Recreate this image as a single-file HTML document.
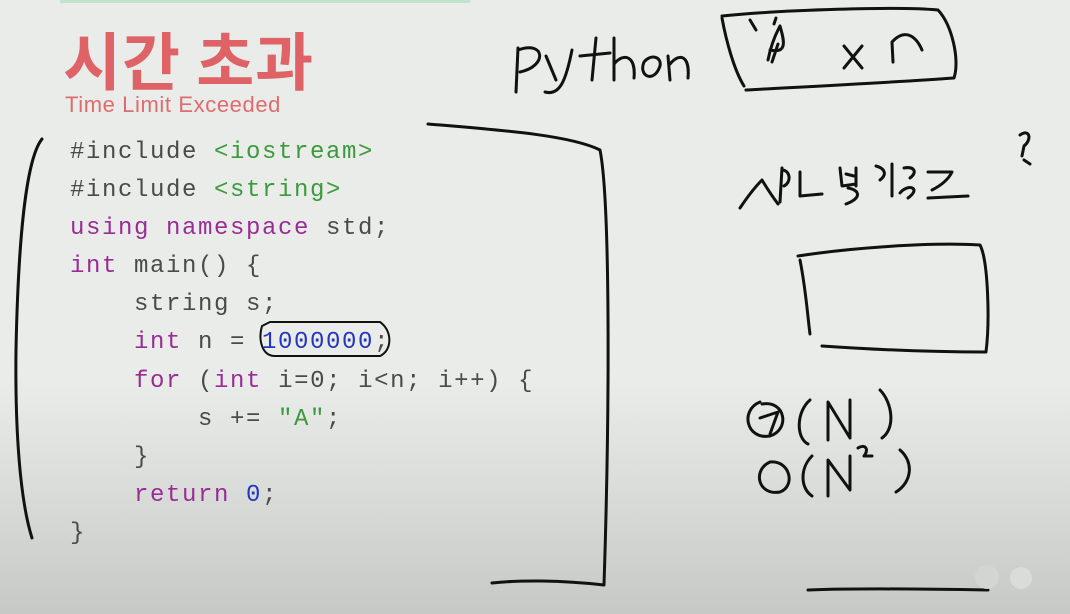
<!DOCTYPE html>
<html><head><meta charset="utf-8"><style>
html,body{margin:0;padding:0}
body{width:1070px;height:614px;overflow:hidden;position:relative;
background:linear-gradient(to bottom,#e9ece9 0%,#e9ece9 62%,#d9dcd9 80%,#c6c9c6 100%);
font-family:"Liberation Sans","Noto Sans CJK KR",sans-serif}
.t{position:absolute;left:63px;top:19px;font-size:63px;font-weight:bold;color:#de6266;letter-spacing:1px;font-family:"Noto Sans CJK KR",sans-serif;line-height:80px}
.s{position:absolute;left:65px;top:92px;font-size:22px;color:#df6b6e;letter-spacing:0.6px}
pre{position:absolute;left:70px;top:134px;margin:0;font-family:"Liberation Mono",monospace;font-size:24px;letter-spacing:1.6px;line-height:38.1px;color:#4a4a4a}
.k{color:#9a2c96}.g{color:#3c9a3c}.b{color:#2437c0}
.top{position:absolute;left:60px;top:0;width:410px;height:3px;background:#bfe6cc}
svg{position:absolute;left:0;top:0}
</style></head><body>
<div class="top"></div>
<div class="t">시간 초과</div>
<div class="s">Time Limit Exceeded</div>
<pre>#include <span class="g">&lt;iostream&gt;</span>
#include <span class="g">&lt;string&gt;</span>
<span class="k">using namespace</span> std;
<span class="k">int</span> main() {
    string s;
    <span class="k">int</span> n = <span class="b">1000000</span>;
    <span class="k">for</span> (<span class="k">int</span> i=0; i&lt;n; i++) {
        s += <span class="g">"A"</span>;
    }
    <span class="k">return</span> <span class="b">0</span>;
}</pre>
<svg width="1070" height="614" fill="none" stroke="#111" stroke-width="3" stroke-linecap="round" stroke-linejoin="round">
<path d="M42 139 C25 160 18 250 16 350 C15 430 20 500 32 538"/>
<path d="M428 124 C500 130 570 135 600 150 C610 200 610 400 604 585 C560 580 520 580 492 583"/>
<path d="M262 326 C258 340 262 356 275 356 L380 356 C393 350 392 330 380 322 L270 322 Z" stroke-width="2"/>
<path d="M518 48 L516 92 M518 50 C545 40 548 66 520 72 M546 56 L556 80 M572 50 C566 80 560 96 545 92 M596 38 L592 80 M580 56 L610 53 M614 38 L614 80 M614 64 C624 52 636 56 634 78 M644 62 C638 76 654 84 660 66 C662 56 650 54 644 62 M668 56 L670 80 M670 64 C680 52 690 56 688 78"/>
<path d="M722 16 C780 10 900 6 938 10 C952 25 960 60 954 78 C900 82 820 86 746 90 M722 18 C726 40 734 70 744 86"/>
<path d="M750 20 L756 30 M768 60 C772 40 778 30 780 26 C784 40 788 54 770 50 M778 44 L772 62 M774 24 L776 18 M844 46 L862 68 M862 46 L844 68 M893 62 L892 42 C905 28 916 36 922 50"/>
<path d="M740 208 C748 196 756 186 762 180 C768 190 772 196 778 204 M782 168 L780 202 M782 170 C790 170 792 182 784 186 M800 172 L800 196 L822 194"/>
<path d="M840 168 L842 186 L856 184 M856 168 L856 186 M846 174 L854 176 M848 188 C860 190 862 198 846 204 M876 166 C884 168 888 174 880 180 M892 164 L892 196 M904 168 C914 166 918 172 910 178 M900 193 C908 183 922 188 908 198 M928 172 L952 172 C948 180 940 186 932 190 M928 198 L968 196 M1020 135 C1030 128 1032 140 1024 146 L1022 156 M1024 160 L1030 164"/>
<path d="M798 256 C850 248 930 242 980 245 C988 260 990 320 986 352 C930 352 880 350 822 346 M800 260 C806 290 808 320 810 334"/>
<path d="M760 402 C740 410 746 440 770 436 C790 430 786 400 762 404 M760 418 L778 412 L770 434 M810 400 C796 412 796 438 808 444 M828 440 L828 402 L850 438 L850 400 M880 390 C892 402 896 428 882 438"/>
<path d="M770 462 C752 470 758 496 780 492 C796 486 790 460 770 462 M812 456 C800 468 800 488 812 496 M828 496 L828 460 L850 490 L850 456 M858 448 C864 444 870 448 864 456 L872 456 M900 450 C914 462 912 482 896 492"/>
<path d="M808 590 C860 588 930 589 988 590"/>
</svg>
<div style="position:absolute;left:975px;top:565px;width:24px;height:24px;border-radius:50%;background:#d2d5d2"></div>
<div style="position:absolute;left:1010px;top:567px;width:22px;height:22px;border-radius:50%;background:#d9dcd9"></div>
</body></html>
